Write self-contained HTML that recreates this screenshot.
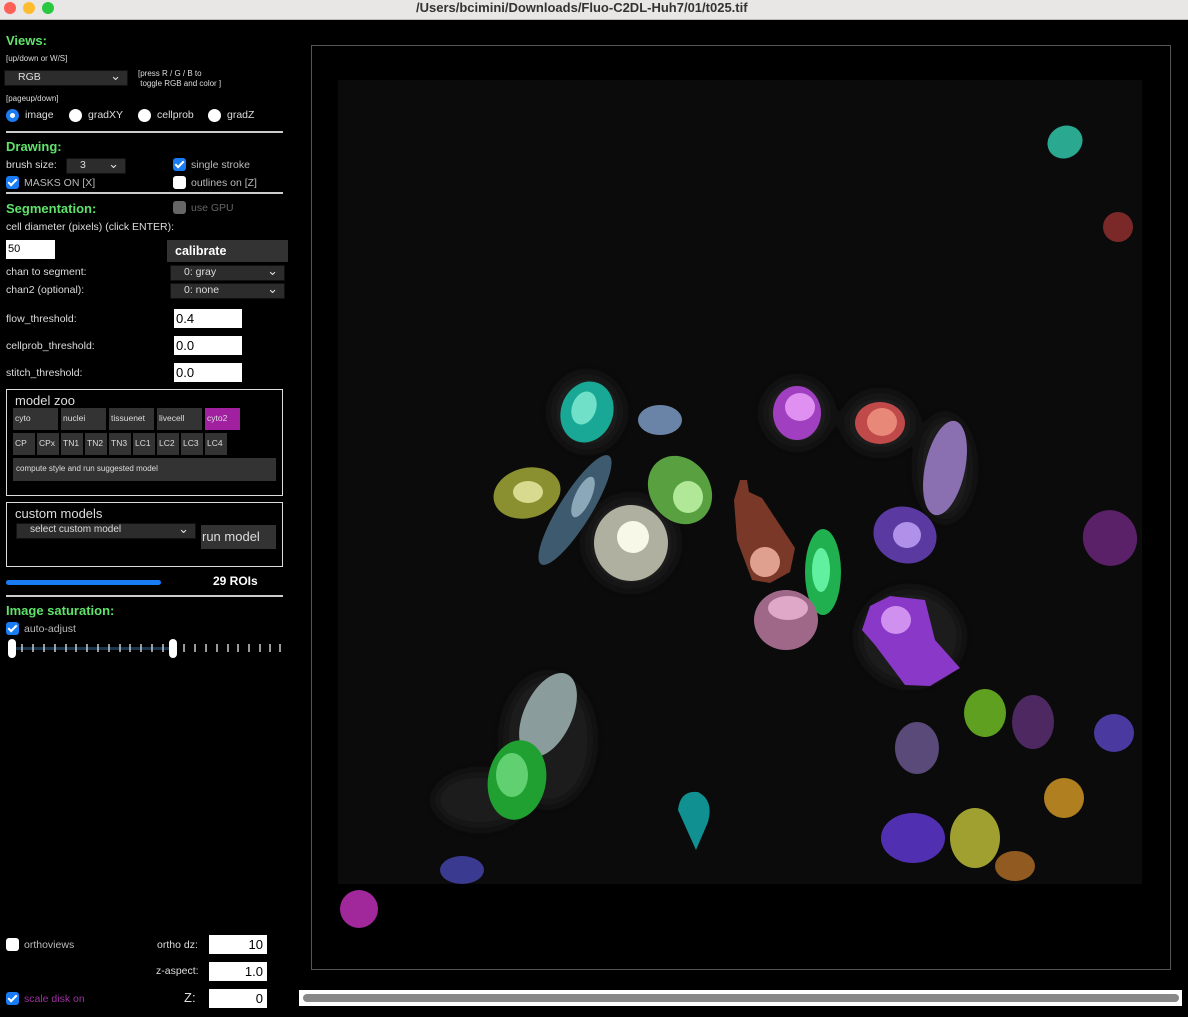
<!DOCTYPE html>
<html><head><meta charset="utf-8"><style>
*{margin:0;padding:0;box-sizing:border-box}
body{width:1188px;height:1017px;background:#000;font-family:"Liberation Sans",Arial,sans-serif;color:#ddd;position:relative;overflow:hidden}
.a{position:absolute;white-space:nowrap}
.g{color:#5fe36a;font-weight:bold;font-size:13px}
.s{font-size:10.5px;color:#ddd}
.t{font-size:8px;color:#ddd}
.hr{position:absolute;left:6px;width:277px;height:2px;background:#ccc}
.cb{position:absolute;width:13px;height:13px;border-radius:3px;background:#1a7cf5}
.cb::after{content:"";position:absolute;left:4px;top:1px;width:3px;height:7px;border:solid #fff;border-width:0 2px 2px 0;transform:rotate(45deg)}
.ucb{position:absolute;width:13px;height:13px;border-radius:3px;background:#fff}
.rad{position:absolute;width:13px;height:13px;border-radius:50%;background:#fff}
.sel{position:absolute;background:#2c2c2c;color:#ddd;font-size:10.5px;border:1px solid #111}
.sel::after{content:"⌄";position:absolute;right:6px;top:-3px;font-size:13px}
.inp{position:absolute;background:#fff;color:#000;font-size:13px;padding-left:2px;line-height:19px}
.btn{position:absolute;background:#333;color:#ddd;font-size:8.5px;padding:5px 2px}
</style></head><body>
<div class="a" style="left:0;top:0;width:1188px;height:20px;background:#e9e7e6;border-bottom:1px solid #bbb"></div>
<div class="a" style="left:4px;top:2px;width:12px;height:12px;border-radius:50%;background:#fe5f57"></div>
<div class="a" style="left:23px;top:2px;width:12px;height:12px;border-radius:50%;background:#febc2e"></div>
<div class="a" style="left:42px;top:2px;width:12px;height:12px;border-radius:50%;background:#28c840"></div>
<div class="a" style="left:416px;top:0px;font-size:13px;font-weight:bold;color:#333">/Users/bcimini/Downloads/Fluo-C2DL-Huh7/01/t025.tif</div>

<div class="a g" style="left:6px;top:33px">Views:</div>
<div class="a t" style="left:6px;top:54px">[up/down or W/S]</div>
<div class="sel" style="left:4px;top:70px;width:124px;height:16px;padding-left:13px">RGB</div>
<div class="a t" style="left:138px;top:69px;line-height:10px">[press R / G / B to<br>&nbsp;toggle RGB and color ]</div>
<div class="a t" style="left:6px;top:94px">[pageup/down]</div>
<div class="rad" style="left:6px;top:109px;background:#1a7cf5"></div><div class="a" style="left:10px;top:113px;width:5px;height:5px;border-radius:50%;background:#fff"></div>
<div class="a s" style="left:25px;top:109px">image</div>
<div class="rad" style="left:69px;top:109px"></div><div class="a s" style="left:88px;top:109px">gradXY</div>
<div class="rad" style="left:138px;top:109px"></div><div class="a s" style="left:157px;top:109px">cellprob</div>
<div class="rad" style="left:208px;top:109px"></div><div class="a s" style="left:227px;top:109px">gradZ</div>
<div class="hr" style="top:131px"></div>

<div class="a g" style="left:6px;top:139px">Drawing:</div>
<div class="a s" style="left:6px;top:159px">brush size:</div>
<div class="sel" style="left:66px;top:158px;width:60px;height:16px;padding-left:13px">3</div>
<div class="cb" style="left:173px;top:158px"></div><div class="a s" style="left:191px;top:159px;color:#bbb">single stroke</div>
<div class="cb" style="left:6px;top:176px"></div><div class="a s" style="left:24px;top:177px;color:#bbb">MASKS ON [X]</div>
<div class="ucb" style="left:173px;top:176px"></div><div class="a s" style="left:191px;top:177px;color:#bbb">outlines on [Z]</div>
<div class="hr" style="top:192px"></div>

<div class="a g" style="left:6px;top:201px">Segmentation:</div>
<div class="a" style="left:173px;top:201px;width:13px;height:13px;border-radius:3px;background:#666"></div>
<div class="a s" style="left:191px;top:202px;color:#666">use GPU</div>
<div class="a s" style="left:6px;top:221px">cell diameter (pixels) (click ENTER):</div>
<div class="inp" style="left:6px;top:240px;width:49px;height:19px;font-size:11px">50</div>
<div class="a" style="left:167px;top:240px;width:121px;height:22px;background:#333;color:#fff;font-weight:bold;font-size:12.5px;padding:4px 8px">calibrate</div>
<div class="a s" style="left:6px;top:266px">chan to segment:</div>
<div class="sel" style="left:170px;top:265px;width:115px;height:16px;padding-left:13px">0: gray</div>
<div class="a s" style="left:6px;top:284px">chan2 (optional):</div>
<div class="sel" style="left:170px;top:283px;width:115px;height:16px;padding-left:13px">0: none</div>
<div class="a s" style="left:6px;top:313px">flow_threshold:</div>
<div class="inp" style="left:174px;top:309px;width:68px;height:19px">0.4</div>
<div class="a s" style="left:6px;top:340px">cellprob_threshold:</div>
<div class="inp" style="left:174px;top:336px;width:68px;height:19px">0.0</div>
<div class="a s" style="left:6px;top:367px">stitch_threshold:</div>
<div class="inp" style="left:174px;top:363px;width:68px;height:19px">0.0</div>

<div class="a" style="left:6px;top:389px;width:277px;height:107px;border:1px solid #ddd"></div>
<div class="a" style="left:15px;top:393px;font-size:13px;color:#ddd">model zoo</div>
<div class="btn" style="left:13px;top:408px;width:45px;height:22px">cyto</div>
<div class="btn" style="left:61px;top:408px;width:45px;height:22px">nuclei</div>
<div class="btn" style="left:109px;top:408px;width:45px;height:22px">tissuenet</div>
<div class="btn" style="left:157px;top:408px;width:45px;height:22px">livecell</div>
<div class="btn" style="left:205px;top:408px;width:35px;height:22px;background:#a020a0">cyto2</div>
<div class="btn" style="left:13px;top:433px;width:22px;height:22px">CP</div>
<div class="btn" style="left:37px;top:433px;width:22px;height:22px">CPx</div>
<div class="btn" style="left:61px;top:433px;width:22px;height:22px">TN1</div>
<div class="btn" style="left:85px;top:433px;width:22px;height:22px">TN2</div>
<div class="btn" style="left:109px;top:433px;width:22px;height:22px">TN3</div>
<div class="btn" style="left:133px;top:433px;width:22px;height:22px">LC1</div>
<div class="btn" style="left:157px;top:433px;width:22px;height:22px">LC2</div>
<div class="btn" style="left:181px;top:433px;width:22px;height:22px">LC3</div>
<div class="btn" style="left:205px;top:433px;width:22px;height:22px">LC4</div>
<div class="btn" style="left:13px;top:458px;width:263px;height:23px;font-size:8px;padding:6px 3px">compute style and run suggested model</div>

<div class="a" style="left:6px;top:502px;width:277px;height:65px;border:1px solid #ddd"></div>
<div class="a" style="left:15px;top:506px;font-size:13px;color:#ddd">custom models</div>
<div class="sel" style="left:16px;top:523px;width:180px;height:16px;padding-left:13px;font-size:10px">select custom model</div>
<div class="a" style="left:201px;top:525px;width:75px;height:24px;background:#333;color:#ddd;font-size:13px;padding:4px 1px">run model</div>
<div class="a" style="left:6px;top:580px;width:155px;height:5px;border-radius:3px;background:#1a7cf5"></div>
<div class="a" style="left:213px;top:574px;font-size:12px;font-weight:bold;color:#fff">29 ROIs</div>
<div class="hr" style="top:595px"></div>
<div class="a g" style="left:6px;top:603px">Image saturation:</div>
<div class="cb" style="left:6px;top:622px"></div><div class="a s" style="left:24px;top:623px;color:#bbb">auto-adjust</div>
<div class="a" style="left:12px;top:647px;width:162px;height:3px;background:#1a3550"></div>
<svg class="a" style="left:0;top:638px" width="290" height="22">
<g stroke="#ccc" stroke-width="1.5">
<path d="M22 6v8M33 6v8M44 6v8M55 6v8M66 6v8M76 6v8M87 6v8M98 6v8M109 6v8M120 6v8M130 6v8M141 6v8M152 6v8M163 6v8M184 6v8M195 6v8M206 6v8M217 6v8M228 6v8M238 6v8M249 6v8M260 6v8M270 6v8M280 6v8"/></g>
<rect x="8" y="1" width="8" height="19" rx="4" fill="#fff"/>
<rect x="169" y="1" width="8" height="19" rx="4" fill="#fff"/>
</svg>

<div class="ucb" style="left:6px;top:938px"></div><div class="a s" style="left:24px;top:939px;color:#bbb">orthoviews</div>
<div class="a s" style="left:157px;top:939px">ortho dz:</div>
<div class="inp" style="left:209px;top:935px;width:58px;height:19px;text-align:right;padding-right:4px">10</div>
<div class="a s" style="left:156px;top:965px">z-aspect:</div>
<div class="inp" style="left:209px;top:962px;width:58px;height:19px;text-align:right;padding-right:4px">1.0</div>
<div class="cb" style="left:6px;top:992px"></div><div class="a s" style="left:24px;top:993px;color:#a030a0">scale disk on</div>
<div class="a" style="left:184px;top:990px;font-size:13px;color:#ddd">Z:</div>
<div class="inp" style="left:209px;top:989px;width:58px;height:19px;text-align:right;padding-right:4px">0</div>
<div class="a" style="left:299px;top:990px;width:883px;height:16px;background:#fff"></div>
<div class="a" style="left:303px;top:994px;width:876px;height:8px;border-radius:4px;background:#888"></div>

<div class="a" style="left:311px;top:45px;width:860px;height:925px;border:1px solid #555"></div>
<svg class="a" style="left:0;top:0" width="1188" height="1017">
<defs><filter id="b"><feGaussianBlur stdDeviation="6"/></filter></defs>
<rect x="338" y="80" width="804" height="804" fill="#0b0b0b"/>
<g fill="#1e1e1e" filter="url(#b)">
<ellipse cx="587" cy="412" rx="36" ry="38"/><ellipse cx="797" cy="413" rx="34" ry="34"/><ellipse cx="880" cy="423" rx="36" ry="30"/>
<ellipse cx="631" cy="543" rx="46" ry="46"/><ellipse cx="548" cy="740" rx="45" ry="65"/><ellipse cx="480" cy="800" rx="45" ry="28"/>
<ellipse cx="910" cy="637" rx="52" ry="48"/><ellipse cx="945" cy="468" rx="28" ry="52"/>
</g>
<g>
<ellipse cx="1065" cy="142" rx="18" ry="16" fill="#2aa890" transform="rotate(-30 1065 142)"/>
<ellipse cx="1118" cy="227" rx="15" ry="15" fill="#7a2828"/>
<ellipse cx="587" cy="412" rx="26" ry="31" fill="#1aa896" transform="rotate(20 587 412)"/>
<ellipse cx="584" cy="408" rx="12" ry="17" fill="#70e0c8" transform="rotate(20 584 408)"/>
<ellipse cx="660" cy="420" rx="22" ry="15" fill="#6a84a8"/>
<ellipse cx="797" cy="413" rx="24" ry="27" fill="#a040c0"/>
<ellipse cx="800" cy="407" rx="15" ry="14" fill="#e090f0"/>
<ellipse cx="880" cy="423" rx="25" ry="21" fill="#c04a4a"/>
<ellipse cx="882" cy="422" rx="15" ry="14" fill="#e88878"/>
<ellipse cx="945" cy="468" rx="20" ry="48" fill="#8a70b0" transform="rotate(12 945 468)"/>
<ellipse cx="527" cy="493" rx="34" ry="25" fill="#8a9030" transform="rotate(-15 527 493)"/>
<ellipse cx="528" cy="492" rx="15" ry="11" fill="#d8da90"/>
<ellipse cx="575" cy="510" rx="16" ry="64" fill="#3e5a6e" transform="rotate(32 575 510)"/>
<ellipse cx="583" cy="497" rx="8" ry="22" fill="#8aa8b8" transform="rotate(25 583 497)"/>
<ellipse cx="680" cy="490" rx="30" ry="36" fill="#58a040" transform="rotate(-35 680 490)"/>
<ellipse cx="688" cy="497" rx="15" ry="16" fill="#b0e898"/>
<ellipse cx="631" cy="543" rx="37" ry="38" fill="#b0b0a0"/>
<ellipse cx="633" cy="537" rx="16" ry="16" fill="#f8f8e8"/>
<path d="M740 480 L747 480 L749 492 L762 498 L795 548 L790 572 L770 583 L752 580 L737 540 L734 500 Z" fill="#7a3828"/>
<ellipse cx="765" cy="562" rx="15" ry="15" fill="#e0a090"/>
<ellipse cx="823" cy="572" rx="18" ry="43" fill="#20b050"/>
<ellipse cx="821" cy="570" rx="9" ry="22" fill="#60f0a0"/>
<ellipse cx="905" cy="535" rx="32" ry="28" fill="#5a3aa0" transform="rotate(20 905 535)"/>
<ellipse cx="907" cy="535" rx="14" ry="13" fill="#b090e8"/>
<ellipse cx="1110" cy="538" rx="27" ry="28" fill="#5a2068" transform="rotate(-20 1110 538)"/>
<ellipse cx="786" cy="620" rx="32" ry="30" fill="#a06888"/>
<ellipse cx="788" cy="608" rx="20" ry="12" fill="#e0a8c8"/>
<path d="M870 606 L890 596 L925 600 L935 640 L960 668 L930 686 L905 685 L875 645 L862 630Z" fill="#8a38c8"/>
<ellipse cx="896" cy="620" rx="15" ry="14" fill="#d090f0"/>
<ellipse cx="985" cy="713" rx="21" ry="24" fill="#60a020"/>
<ellipse cx="1033" cy="722" rx="21" ry="27" fill="#4e2860"/>
<ellipse cx="1114" cy="733" rx="20" ry="19" fill="#4a3aa0"/>
<ellipse cx="917" cy="748" rx="22" ry="26" fill="#5a4a7a"/>
<ellipse cx="548" cy="715" rx="24" ry="45" fill="#8a9c9c" transform="rotate(25 548 715)"/>
<ellipse cx="517" cy="780" rx="29" ry="40" fill="#20a030" transform="rotate(10 517 780)"/>
<ellipse cx="512" cy="775" rx="16" ry="22" fill="#60d070"/>
<path d="M678 810 Q680 790 698 792 Q714 800 708 822 L696 850 Z" fill="#109090"/>
<ellipse cx="1064" cy="798" rx="20" ry="20" fill="#b08020"/>
<ellipse cx="913" cy="838" rx="32" ry="25" fill="#5030b0"/>
<ellipse cx="975" cy="838" rx="25" ry="30" fill="#a0a030"/>
<ellipse cx="1015" cy="866" rx="20" ry="15" fill="#905a20"/>
<ellipse cx="462" cy="870" rx="22" ry="14" fill="#3a3a90"/>
</g>
<circle cx="359" cy="909" r="19" fill="#a0289a"/>
</svg>
</body></html>
